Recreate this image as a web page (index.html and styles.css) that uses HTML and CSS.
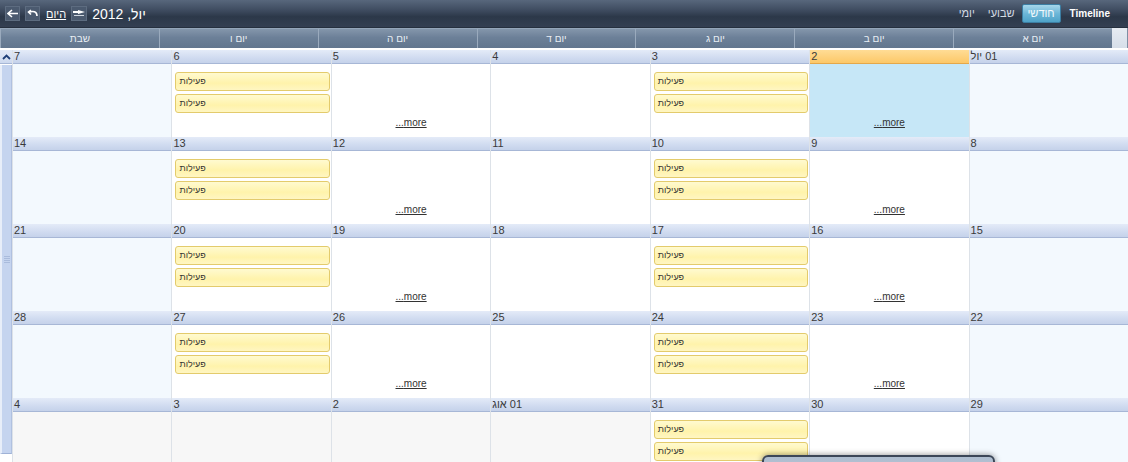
FILE: index.html
```html
<!DOCTYPE html>
<html lang="he">
<head>
    <meta charset="UTF-8">
    <title>לוח פעילויות - יולי 2012</title>
    <link rel="stylesheet" href="styles.css">
</head>
<body>

<div class="scheduler" dir="rtl">

    <!-- top bar: views on the right, navigation on the left -->
    <div class="toolbar">
        <div class="views">
            <span class="view view-timeline">Timeline</span>
            <span class="view active">חודשי</span>
            <span class="view view-week">שבועי</span>
            <span class="view">יומי</span>
        </div>
        <div class="nav">
            <span class="period">יול, 2012</span>
            <span class="nav-btn picker">
                <svg width="12" height="8" viewBox="0 0 12 8"><rect x="0" y="1" width="6" height="2" fill="#fff"/><path d="M5 0 L12 2 L5 4 Z" fill="#fff"/><rect x="1" y="5" width="10" height="1" fill="#cfd6df"/></svg>
            </span>
            <a href="#" class="today-link">היום</a>
            <span class="nav-btn">
                <svg width="11" height="9" viewBox="0 0 11 9"><path d="M10 7 C10 2, 6 2, 2 3 M4 1 L1.5 3 L4 5.5" fill="none" stroke="#fff" stroke-width="1.6"/></svg>
            </span>
            <span class="nav-btn">
                <svg width="12" height="9" viewBox="0 0 12 9"><path d="M5 1 L1 4.5 L5 8 M1.5 4.5 H11" fill="none" stroke="#fff" stroke-width="1.6"/></svg>
            </span>
        </div>
    </div>

    <!-- weekday names -->
    <div class="head-row">
        <div class="head-gap"></div>
        <div class="day-names">
            <div>יום א</div>
            <div>יום ב</div>
            <div>יום ג</div>
            <div>יום ד</div>
            <div>יום ה</div>
            <div>יום ו</div>
            <div>שבת</div>
        </div>
    </div>

    <div class="month">
        <div class="weeks">

            <div class="week">
                <div class="day weekend"><div class="day-head">01 יול</div><div class="day-body"></div></div>
                <div class="day today"><div class="day-head">2</div><div class="day-body"><a href="#" class="more">more...</a></div></div>
                <div class="day"><div class="day-head">3</div><div class="day-body"><div class="event">פעילות</div><div class="event">פעילות</div></div></div>
                <div class="day"><div class="day-head">4</div><div class="day-body"></div></div>
                <div class="day"><div class="day-head">5</div><div class="day-body"><a href="#" class="more">more...</a></div></div>
                <div class="day"><div class="day-head">6</div><div class="day-body"><div class="event">פעילות</div><div class="event">פעילות</div></div></div>
                <div class="day weekend"><div class="day-head">7</div><div class="day-body"></div></div>
            </div>

            <div class="week">
                <div class="day weekend"><div class="day-head">8</div><div class="day-body"></div></div>
                <div class="day"><div class="day-head">9</div><div class="day-body"><a href="#" class="more">more...</a></div></div>
                <div class="day"><div class="day-head">10</div><div class="day-body"><div class="event">פעילות</div><div class="event">פעילות</div></div></div>
                <div class="day"><div class="day-head">11</div><div class="day-body"></div></div>
                <div class="day"><div class="day-head">12</div><div class="day-body"><a href="#" class="more">more...</a></div></div>
                <div class="day"><div class="day-head">13</div><div class="day-body"><div class="event">פעילות</div><div class="event">פעילות</div></div></div>
                <div class="day weekend"><div class="day-head">14</div><div class="day-body"></div></div>
            </div>

            <div class="week">
                <div class="day weekend"><div class="day-head">15</div><div class="day-body"></div></div>
                <div class="day"><div class="day-head">16</div><div class="day-body"><a href="#" class="more">more...</a></div></div>
                <div class="day"><div class="day-head">17</div><div class="day-body"><div class="event">פעילות</div><div class="event">פעילות</div></div></div>
                <div class="day"><div class="day-head">18</div><div class="day-body"></div></div>
                <div class="day"><div class="day-head">19</div><div class="day-body"><a href="#" class="more">more...</a></div></div>
                <div class="day"><div class="day-head">20</div><div class="day-body"><div class="event">פעילות</div><div class="event">פעילות</div></div></div>
                <div class="day weekend"><div class="day-head">21</div><div class="day-body"></div></div>
            </div>

            <div class="week">
                <div class="day weekend"><div class="day-head">22</div><div class="day-body"></div></div>
                <div class="day"><div class="day-head">23</div><div class="day-body"><a href="#" class="more">more...</a></div></div>
                <div class="day"><div class="day-head">24</div><div class="day-body"><div class="event">פעילות</div><div class="event">פעילות</div></div></div>
                <div class="day"><div class="day-head">25</div><div class="day-body"></div></div>
                <div class="day"><div class="day-head">26</div><div class="day-body"><a href="#" class="more">more...</a></div></div>
                <div class="day"><div class="day-head">27</div><div class="day-body"><div class="event">פעילות</div><div class="event">פעילות</div></div></div>
                <div class="day weekend"><div class="day-head">28</div><div class="day-body"></div></div>
            </div>

            <div class="week">
                <div class="day weekend"><div class="day-head">29</div><div class="day-body"></div></div>
                <div class="day"><div class="day-head">30</div><div class="day-body"></div></div>
                <div class="day"><div class="day-head">31</div><div class="day-body"><div class="event">פעילות</div><div class="event">פעילות</div></div></div>
                <div class="day other"><div class="day-head">01 אוג</div><div class="day-body"></div></div>
                <div class="day other"><div class="day-head">2</div><div class="day-body"></div></div>
                <div class="day other"><div class="day-head">3</div><div class="day-body"></div></div>
                <div class="day other"><div class="day-head">4</div><div class="day-body"></div></div>
            </div>

        </div>

        <!-- vertical scroller sits on the left in rtl -->
        <div class="vscroll">
            <div class="vscroll-up">
                <svg width="9" height="6" viewBox="0 0 9 6"><path d="M1 5 L4.5 1.5 L8 5" fill="none" stroke="#1f3f78" stroke-width="1.8"/></svg>
            </div>
            <div class="vscroll-thumb"><span class="grip"></span></div>
        </div>
    </div>

    <!-- appointment tooltip, opening below the grid -->
    <div class="tooltip"></div>
</div>

</body>
</html>
```

FILE: styles.css
```css
html, body {
    margin: 0;
    padding: 0;
    overflow: hidden;
}

body {
    font-family: "Liberation Sans", "DejaVu Sans", sans-serif;
    background-color: #fff;
    color: #333;
}

.scheduler {
    position: relative;
    width: 1128px;
    height: 462px;
    overflow: hidden;
}

/* toolbar */
.toolbar {
    height: 28px;
    display: flex;
    justify-content: space-between;
    align-items: center;
    background: linear-gradient(#58677c, #3d4a5e 40%, #2c3849 62%, #343f52);
    border-bottom: 1px solid #26303f;
    box-sizing: border-box;
}

.views {
    display: flex;
    align-items: center;
    padding-right: 18px;
}

.view {
    font-size: 11px;
    color: #d3dae3;
    line-height: 13px;
}

.view-timeline {
    font-weight: bold;
    font-size: 10px;
    color: #fff;
    margin-left: 9px;
}

.view.active {
    color: #f2f9fc;
    background: linear-gradient(#a6d6ea, #6db7d8 50%, #4ea2c8);
    border: 1px solid #3c7ea3;
    border-radius: 2px;
    padding: 2px 5px;
    margin-left: 7px;
}

.view-week {
    margin-left: 13px;
}

.nav {
    display: flex;
    align-items: center;
    gap: 5px;
    padding-left: 5px;
}

.period {
    font-size: 14px;
    color: #fff;
}

.nav-btn {
    width: 15px;
    height: 15px;
    display: flex;
    align-items: center;
    justify-content: center;
    background-color: #4b5a6f;
    border: 1px solid #5d6c80;
    box-sizing: border-box;
}

.nav-btn.picker {
    width: 16px;
    margin-left: -1px;
}

.today-link {
    font-size: 11px;
    color: #fff;
    text-decoration: underline;
    margin: 0 1px;
}

/* weekday header */
.head-row {
    display: flex;
    height: 21px;
    border-bottom: 1px solid #fff;
    box-sizing: border-box;
}

.head-gap {
    width: 16px;
    background: linear-gradient(#e6ebf2, #d6dee9);
    border-right: 1px solid #7e8ea3;
    box-sizing: border-box;
}

.day-names {
    flex: 1;
    display: grid;
    grid-template-columns: repeat(7, 1fr);
    background: linear-gradient(#8496ab, #6c8098 45%, #62768e);
    border-top: 1px solid #95a6ba;
}

.day-names div {
    font-size: 10px;
    line-height: 19px;
    text-align: center;
    color: #e9eef4;
    border-left: 1px solid #9aaabd;
}

/* month grid */
.month {
    display: flex;
    margin-top: 1px;
}

.weeks {
    flex: 1;
}

.week {
    display: grid;
    grid-template-columns: repeat(7, 1fr);
    height: 87px;
}

.day {
    display: flex;
    flex-direction: column;
    border-left: 1px solid #dde2e8;
    min-width: 0;
    background-color: #fff;
}

.day.weekend {
    background-color: #f3f9fe;
}

.day.other {
    background-color: #f7f7f7;
}

.day.today {
    background-color: #c6e7f7;
}

.day-head {
    height: 13px;
    line-height: 13px;
    font-size: 11px;
    text-align: left;
    padding-left: 1px;
    color: #3a3a3a;
    background: linear-gradient(#e4ebf8, #d0dbf0 60%, #c5d2ea);
    border-bottom: 1px solid #a7b7d6;
}

.day.today .day-head {
    background: linear-gradient(#ffdc95, #fcc868);
    border-bottom-color: #e4a84a;
}

.day-body {
    flex: 1;
    display: flex;
    flex-direction: column;
    padding-top: 8px;
}

.event {
    height: 17px;
    line-height: 17px;
    margin: 0 1px 3px 3px;
    padding-left: 3px;
    font-size: 9px;
    color: #333;
    text-align: left;
    background: linear-gradient(#fffad0, #fff3ab 60%, #fff6c2);
    border: 1px solid #e3cb6c;
    border-radius: 3px;
}

.more {
    margin-top: auto;
    margin-bottom: 8px;
    font-size: 10px;
    line-height: 12px;
    color: #333;
    text-align: center;
    text-decoration: underline;
}

/* vertical scroller */
.vscroll {
    width: 12px;
    display: flex;
    flex-direction: column;
}

.vscroll-up {
    height: 13px;
    display: flex;
    align-items: center;
    justify-content: center;
    background: linear-gradient(#e3eaf7, #cdd9ef);
    border-bottom: 1px solid #a7b7d6;
}

.vscroll-thumb {
    height: 388px;
    display: flex;
    align-items: center;
    justify-content: center;
    background-color: #c5d4ef;
    border-left: 2px solid #e8eef9;
    border-right: 1px solid #b0c1e0;
    border-bottom: 1px solid #9fb2d6;
    margin-top: 1px;
}

.grip {
    width: 6px;
    height: 7px;
    background: repeating-linear-gradient(#a9bbdc 0 1px, transparent 1px 2px);
}

/* tooltip peeking in at the bottom */
.tooltip {
    position: absolute;
    left: 762px;
    top: 455px;
    width: 233px;
    height: 40px;
    background: linear-gradient(#aebdcf, #c2cedb);
    border: 2px solid #3b4657;
    border-radius: 6px;
    box-shadow: 0 0 6px rgba(0, 0, 0, 0.45);
    box-sizing: border-box;
}
```
